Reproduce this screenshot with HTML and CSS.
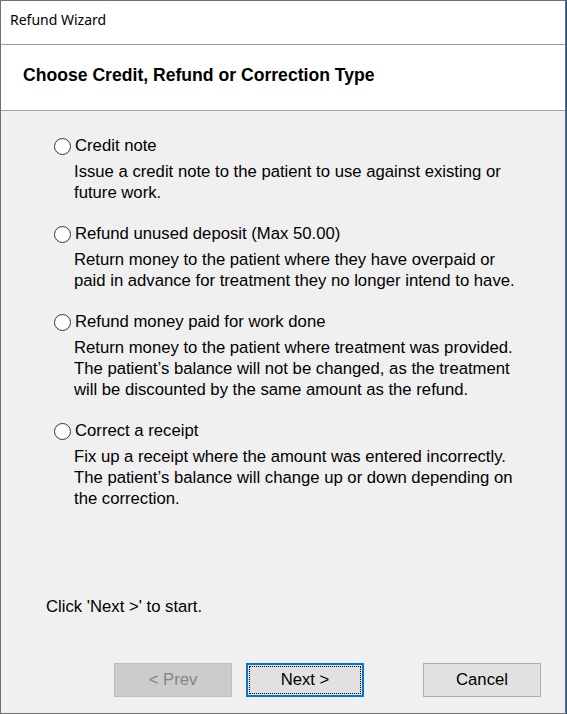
FILE: index.html
```html
<!DOCTYPE html>
<html>
<head>
<meta charset="utf-8">
<link rel="stylesheet" href="styles.css">
</head>
<body>
<div class="window">
  <div class="titlebar">Refund Wizard</div>
  <div class="header">Choose Credit, Refund or Correction Type</div>
  <div class="body">
    <div class="options">
      <div class="option">
        <label class="radio-row"><span class="radio"></span><span>Credit note</span></label>
        <p class="desc">Issue a credit note to the patient to use against existing or<br>future work.</p>
      </div>
      <div class="option">
        <label class="radio-row"><span class="radio"></span><span>Refund unused deposit (Max 50.00)</span></label>
        <p class="desc">Return money to the patient where they have overpaid or<br>paid in advance for treatment they no longer intend to have.</p>
      </div>
      <div class="option">
        <label class="radio-row"><span class="radio"></span><span>Refund money paid for work done</span></label>
        <p class="desc">Return money to the patient where treatment was provided.<br>The patient’s balance will not be changed, as the treatment<br>will be discounted by the same amount as the refund.</p>
      </div>
      <div class="option">
        <label class="radio-row"><span class="radio"></span><span>Correct a receipt</span></label>
        <p class="desc">Fix up a receipt where the amount was entered incorrectly.<br>The patient’s balance will change up or down depending on<br>the correction.</p>
      </div>
    </div>
    <div class="hint">Click 'Next &gt;' to start.</div>
    <div class="buttons">
      <button class="btn disabled">&lt; Prev</button>
      <button class="btn default"><span class="focus">Next &gt;</span></button>
      <span class="spacer"></span>
      <button class="btn">Cancel</button>
    </div>
  </div>
</div>
</body>
</html>
```
FILE: styles.css
```css
html, body {
  margin: 0;
  padding: 0;
  background: #1d4f7a;
}
body {
  width: 567px;
  height: 714px;
  overflow: hidden;
  font-family: "Liberation Sans", Arial, sans-serif;
  color: #000;
}
.window {
  width: 566px;
  height: 714px;
  box-sizing: border-box;
  border: 1px solid #707070;
  display: flex;
  flex-direction: column;
  background: #f0f0f0;
}
.titlebar {
  box-sizing: border-box;
  height: 44px;
  background: #fff;
  border-bottom: 1px solid #a0a0a0;
  font-family: "Noto Sans", "Open Sans", sans-serif;
  font-size: 14px;
  padding-left: 9px;
  padding-bottom: 6px;
  display: flex;
  align-items: center;
}
.header {
  height: 66px;
  box-sizing: border-box;
  background: #fff;
  border-bottom: 1px solid #a0a0a0;
  font-weight: bold;
  font-size: 17.6px;
  padding-left: 22px;
  padding-bottom: 4px;
  display: flex;
  align-items: center;
}
.body {
  flex: 1;
  display: flex;
  flex-direction: column;
  font-size: 16.7px;
}
.options {
  padding: 25px 0 0 53px;
  display: flex;
  flex-direction: column;
  gap: 21px;
}
.radio-row {
  display: flex;
  align-items: center;
  gap: 4px;
  height: 20px;
}
.radio {
  width: 15px;
  height: 15px;
  border: 1px solid #333;
  border-radius: 50%;
  background: #fff;
  flex: none;
}
.desc {
  margin: 5px 0 0 20px;
  line-height: 21px;
  white-space: nowrap;
}
.hint {
  margin-top: auto;
  padding-left: 45px;
  margin-bottom: 46px;
}
.buttons {
  display: flex;
  padding: 0 24px 16px 113px;
  gap: 14px;
}
.spacer { flex: 1; }
.btn {
  width: 118px;
  height: 34px;
  box-sizing: border-box;
  background: #e1e1e1;
  border: 1px solid #adadad;
  font-family: "Liberation Sans", Arial, sans-serif;
  font-size: 16.7px;
  color: #000;
  padding: 0;
  display: flex;
  align-items: center;
  justify-content: center;
}
.btn.disabled {
  background: #cccccc;
  border-color: #bfbfbf;
  color: #838383;
}
.btn.default {
  border: 2px solid #0078d7;
  padding: 1px;
}
.btn.default .focus {
  flex: 1;
  align-self: stretch;
  border: 1px dotted #000;
  display: flex;
  align-items: center;
  justify-content: center;
}
```
